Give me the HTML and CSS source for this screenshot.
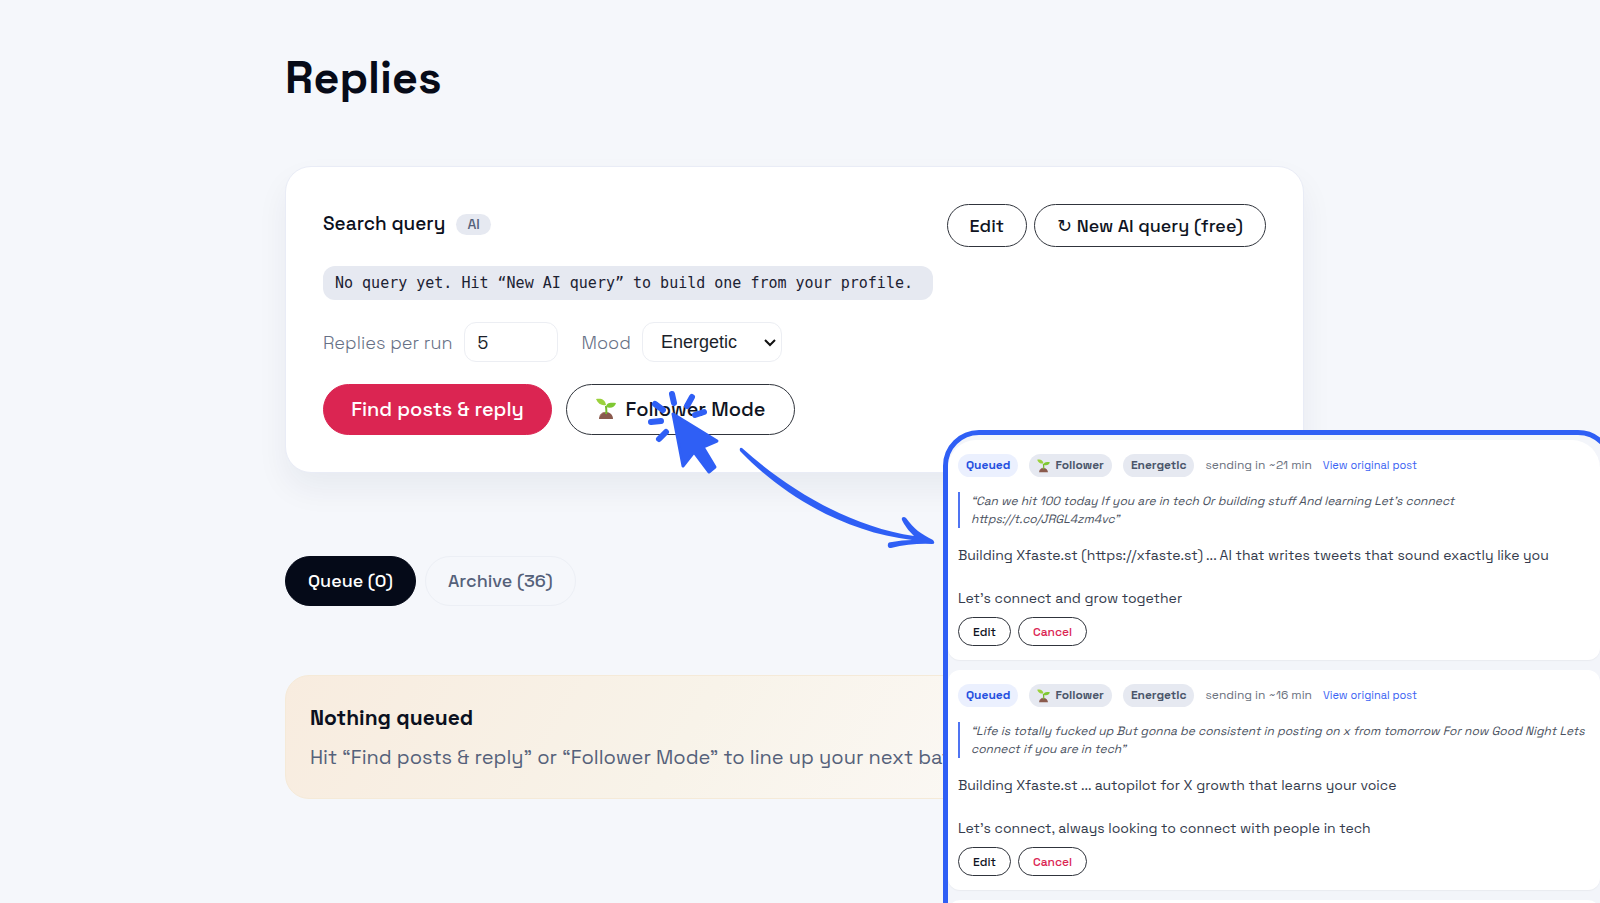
FILE: index.html
```html
<!DOCTYPE html>
<html lang="en">
<head>
    <meta charset="UTF-8">
    <meta name="viewport" content="width=device-width, initial-scale=1.0">
    <title>Replies</title>
    <link rel="stylesheet" href="styles.css">
</head>
<body>
    <!-- shared sprout icon -->
    <svg class="defs" width="0" height="0" aria-hidden="true">
        <symbol id="sprout" viewBox="0 0 20 22">
            <path d="M3 21c0-4 3-7 7-7s7 3 7 7z" fill="#8a5a4d"/>
            <path d="M4 18c2-4 5-4 7-3" fill="none" stroke="#a9776a" stroke-width="1"/>
            <path d="M10 16c1-3 0-5 0-8" fill="none" stroke="#74b82c" stroke-width="2"/>
            <path d="M10 7C6 8 2 6 0 1c5-1 9 0 10 6z" fill="#9bd13c"/>
            <path d="M10 9c0-4 4-5 10-4-1 4-5 6-10 4z" fill="#7fc832"/>
        </symbol>
    </svg>

    <main class="page">
        <h1>Replies</h1>

        <section class="card">
            <div class="card-head">
                <h2>Search query <span class="tag">AI</span></h2>
                <div class="head-actions">
                    <button type="button" class="btn">Edit</button>
                    <button type="button" class="btn"><span class="refresh">↻</span> New AI query (free)</button>
                </div>
            </div>
            <code class="query">No query yet. Hit “New AI query” to build one from your profile.</code>
            <div class="options">
                <label for="perRun">Replies per run</label>
                <input type="text" inputmode="numeric" id="perRun" value="5">
                <label for="mood">Mood</label>
                <div class="select-wrap">
                    <select id="mood">
                        <option>Energetic</option>
                        <option>Friendly</option>
                        <option>Curious</option>
                    </select>
                    <svg class="chevron" viewBox="0 0 14 10" aria-hidden="true"><path d="M2 2l5 5 5-5"/></svg>
                </div>
            </div>
            <div class="run-actions">
                <button type="button" class="btn btn-large btn-primary">Find posts &amp; reply</button>
                <div class="follower">
                    <button type="button" class="btn btn-large"><svg class="sprout" aria-hidden="true"><use href="#sprout"/></svg>Follower Mode</button>
                    <!-- click cursor and arrow towards the queue preview -->
                    <svg class="pointer" viewBox="640 380 310 180" aria-hidden="true">
                        <g class="rays">
                            <path d="M672 394l2 9M692 397l-5 9M704 412l-9 3M655 404l8 6M651 422l10-1M659 439l7-7"/>
                        </g>
                        <path class="cursor" d="M673 414L717 441L703 447L715 467L709 472L694 452L683 466Z"/>
                        <path class="arrow" d="M742 448C786 488 850 527 914 536C908 530 905 526 902 520C901 517 904 516 906 518C914 529 921 534 933 540Q936 544 932 544Q912 543 891 548Q887 548 888 544Q888 542 892 542Q902 540 912 540C845 532 783 496 740 451Q739 447 742 448Z"/>
                    </svg>
                </div>
            </div>
        </section>

        <nav class="tabs">
            <button type="button" class="tab active">Queue (0)</button>
            <button type="button" class="tab">Archive (36)</button>
        </nav>

        <section class="empty">
            <h3>Nothing queued</h3>
            <p>Hit “Find posts &amp; reply” or “Follower Mode” to line up your next batch.</p>
        </section>
    </main>

    <aside class="preview">
        <article class="reply">
            <div class="meta">
                <span class="pill queued">Queued</span>
                <span class="pill"><svg class="sprout" aria-hidden="true"><use href="#sprout"/></svg>Follower</span>
                <span class="pill">Energetic</span>
                <span class="when">sending in ~21 min</span>
                <a href="#">View original post</a>
            </div>
            <blockquote>“Can we hit 100 today If you are in tech Or building stuff And learning Let’s connect<br>https://t.co/JRGL4zm4vc”</blockquote>
            <p>Building Xfaste.st (https://xfaste.st) ... AI that writes tweets that sound exactly like you</p>
            <p>Let’s connect and grow together</p>
            <div class="reply-actions">
                <button type="button" class="btn btn-small">Edit</button>
                <button type="button" class="btn btn-small cancel">Cancel</button>
            </div>
        </article>

        <article class="reply">
            <div class="meta">
                <span class="pill queued">Queued</span>
                <span class="pill"><svg class="sprout" aria-hidden="true"><use href="#sprout"/></svg>Follower</span>
                <span class="pill">Energetic</span>
                <span class="when">sending in ~16 min</span>
                <a href="#">View original post</a>
            </div>
            <blockquote>“Life is totally fucked up But gonna be consistent in posting on x from tomorrow For now Good Night Lets<br>connect if you are in tech”</blockquote>
            <p>Building Xfaste.st ... autopilot for X growth that learns your voice</p>
            <p>Let’s connect, always looking to connect with people in tech</p>
            <div class="reply-actions">
                <button type="button" class="btn btn-small">Edit</button>
                <button type="button" class="btn btn-small cancel">Cancel</button>
            </div>
        </article>

        <article class="reply"></article>
    </aside>
</body>
</html>
```
FILE: styles.css
```css
* {
    box-sizing: border-box;
}
html, body {
    height: 100%;
}
body {
    position: relative;
    margin: 0;
    overflow: hidden;
    background: #f5f7fb;
    color: #0b1020;
    font-family: "Space Grotesk", Inter, "Liberation Sans", sans-serif;
}
.defs {
    position: absolute;
}
.page {
    margin: 0 296px 0 285px;
    padding-top: 49px;
}
h1, h2, h3, p, blockquote {
    margin: 0;
}
h1 {
    font-size: 45px;
    line-height: 58px;
    font-weight: 700;
    margin-bottom: 59px;
    color: #070b18;
}
button {
    font-family: inherit;
    cursor: pointer;
}

/* query card */
.card {
    background: #fff;
    border: 1px solid #e9ecf6;
    border-radius: 26px;
    padding: 37px;
    box-shadow: 0 16px 32px rgba(20, 30, 60, 0.06);
}
.card-head {
    display: flex;
    justify-content: space-between;
    align-items: flex-start;
    margin-bottom: 19px;
}
h2 {
    display: flex;
    align-items: center;
    gap: 11px;
    font-size: 19px;
    line-height: 40px;
    font-weight: 500;
}
.tag {
    padding: 0 11px;
    border-radius: 11px;
    background: #e6e9f1;
    color: #55617a;
    font-size: 14px;
    line-height: 21px;
}
.head-actions {
    display: flex;
    gap: 7px;
}
.btn {
    height: 43px;
    padding: 0 22px;
    border: 1px solid #30343c;
    border-radius: 26px;
    background: #fff;
    color: #0f1422;
    font-size: 18px;
    font-weight: 500;
    white-space: nowrap;
}
.refresh {
    font-family: "DejaVu Sans", sans-serif;
    font-size: 18px;
    line-height: 18px;
}
.query {
    display: block;
    width: fit-content;
    padding: 0 20px 0 12px;
    border-radius: 12px;
    background: #e6e9f1;
    color: #1c2233;
    font-family: "DejaVu Sans Mono", "Liberation Mono", monospace;
    font-size: 15px;
    line-height: 34px;
}
.options {
    display: flex;
    align-items: center;
    margin: 22px 0;
    color: #667085;
    font-size: 18px;
}
.options label {
    font-weight: 300;
}
.options input, .options select {
    height: 40px;
    border: 1px solid #eceef3;
    border-radius: 12px;
    background: #fff;
    color: #1b1f2a;
    font-size: 18px;
}
.options input {
    width: 94px;
    margin: 0 24px 0 11px;
    padding: 0 13px;
    font-family: inherit;
}
.select-wrap {
    position: relative;
    margin-left: 11px;
}
.options select {
    width: 140px;
    padding: 0 18px;
    appearance: none;
    font-family: "Liberation Sans", sans-serif;
}
.chevron {
    position: absolute;
    right: 5px;
    top: 16px;
    width: 14px;
    height: 10px;
    fill: none;
    stroke: #111;
    stroke-width: 2;
    pointer-events: none;
}
.run-actions {
    display: flex;
    gap: 14px;
}
.btn-large {
    display: flex;
    align-items: center;
    justify-content: center;
    gap: 10px;
    width: 229px;
    height: 51px;
    padding: 0 0 2px;
    font-size: 20px;
}
.btn-primary {
    background: #db2552;
    border-color: #db2552;
    color: #fff;
}
.btn-large .sprout {
    width: 20px;
    height: 22px;
}
.follower {
    position: relative;
}
.pointer {
    position: absolute;
    left: 74px;
    top: -4px;
    width: 310px;
    height: 180px;
    fill: #2f5ff5;
    pointer-events: none;
}
.rays {
    fill: none;
    stroke: #2f5ff5;
    stroke-width: 6;
    stroke-linecap: round;
}
.cursor {
    stroke: #2f5ff5;
    stroke-width: 3;
    stroke-linejoin: round;
}

/* tabs */
.tabs {
    display: flex;
    gap: 9px;
    margin: 83px 0 69px;
}
.tab {
    height: 50px;
    padding: 0 22px 2px;
    border: 1px solid #eceff5;
    border-radius: 25px;
    background: transparent;
    color: #55617a;
    font-size: 18px;
    font-weight: 500;
}
.tab.active {
    background: #050a18;
    border-color: #050a18;
    color: #fff;
}

/* empty state */
.empty {
    padding: 24px 24px 22px;
    border: 1px solid #f5ead8;
    border-radius: 24px;
    background: linear-gradient(120deg, #f8ecdf 0%, #f8f3e9 40%, #fbf8f4 70%);
}
h3 {
    margin-bottom: 2px;
    font-size: 21px;
    line-height: 36px;
    font-weight: 700;
}
.empty p {
    color: #55617a;
    font-size: 20px;
    line-height: 38px;
    white-space: nowrap;
}

/* queue preview */
.preview {
    position: absolute;
    top: 430px;
    left: 943px;
    right: -14px;
    bottom: -40px;
    display: flex;
    flex-direction: column;
    gap: 10px;
    padding: 5px 9px 0 0;
    overflow: hidden;
    border: 5px solid #2f5ff5;
    border-radius: 36px;
    background: #f3f5fa;
}
.reply {
    flex: none;
    height: 220px;
    padding: 14px 10px 12px;
    border-radius: 12px;
    background: #fff;
    box-shadow: 0 1px 1px #e9ebf0;
}
.reply:first-child {
    border-top-left-radius: 28px;
    border-top-right-radius: 28px;
}
.meta {
    display: flex;
    align-items: center;
    gap: 11px;
    margin-bottom: 15px;
    font-size: 12px;
    line-height: 23px;
}
.pill {
    display: flex;
    align-items: center;
    gap: 5px;
    padding: 0 8px;
    border-radius: 12px;
    background: #e6e9f1;
    color: #4b566b;
    font-weight: 600;
}
.pill .sprout {
    width: 13px;
    height: 14px;
}
.queued {
    background: #ebf0fe;
    color: #2650e0;
}
.when {
    color: #6b7280;
}
.meta a {
    color: #3b63f3;
    font-size: 11px;
    text-decoration: none;
}
blockquote {
    margin-bottom: 13px;
    padding-left: 11px;
    border-left: 2px solid #4f74f2;
    color: #4a5160;
    font-size: 12px;
    line-height: 18px;
    font-style: italic;
    white-space: nowrap;
}
.reply p {
    margin-bottom: 15px;
    color: #343b4c;
    font-size: 14px;
    line-height: 28px;
    white-space: nowrap;
}
.reply p + p {
    margin-bottom: 5px;
}
.reply-actions {
    display: flex;
    gap: 7px;
}
.btn-small {
    height: 29px;
    padding: 0 14px;
    font-size: 12px;
}
.cancel {
    color: #db2552;
}
```
